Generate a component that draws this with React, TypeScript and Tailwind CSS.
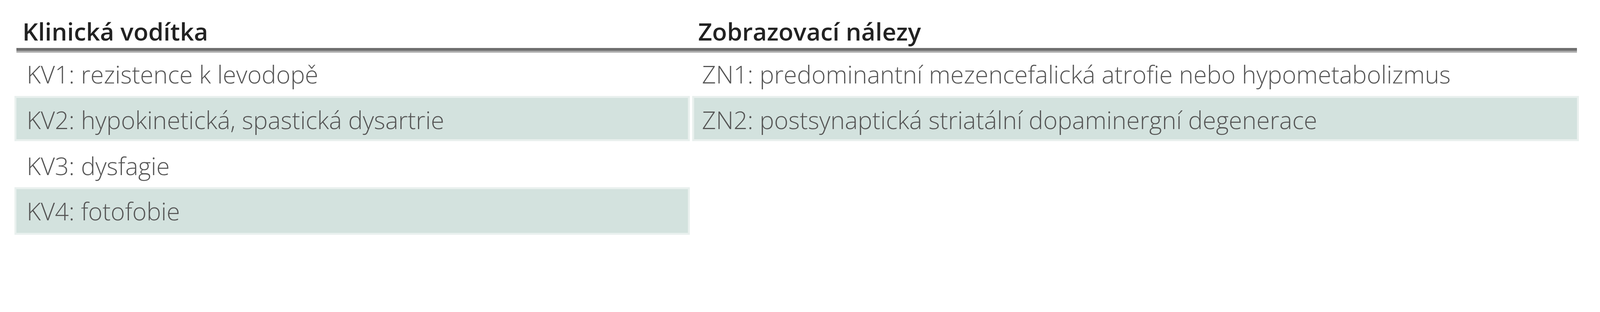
import React from "react";

type Row = {
  left: string;
  right: string;
  h: string;
  pt: string;
  band: boolean;
  rightBand: boolean;
};

const rows: Row[] = [
  { left: "KV1: rezistence k levodopě", right: "ZN1: predominantní mezencefalická atrofie nebo hypometabolizmus", h: "h-[111.2px]", pt: "pt-[18.4px]", band: false, rightBand: false },
  { left: "KV2: hypokinetická, spastická dysartrie", right: "ZN2: postsynaptická striatální dopaminergní degenerace", h: "h-[116px]", pt: "pt-[24.8px]", band: true, rightBand: true },
  { left: "KV3: dysfagie", right: "", h: "h-[117.6px]", pt: "pt-[26.4px]", band: false, rightBand: false },
  { left: "KV4: fotofobie", right: "", h: "h-[122.4px]", pt: "pt-[24.8px]", band: true, rightBand: false },
];

const bandCls = "border-[5.6px] border-[#e9f0ee] bg-[#d3e2de]";
const plainCls = "border-[5.6px] border-transparent";

export default function App() {
  return (
    <div className="w-full min-h-[640px] bg-white pl-[36.8px] font-['Open_Sans',sans-serif]">
      <div className="grid grid-cols-[1728.8px_2270.4px] gap-x-[6.4px] h-[123.2px]">
        <div className="pt-[48.8px] pl-[20.8px] text-[62.4px] leading-none font-[550] text-[#222222] whitespace-nowrap">
          Klinická vodítka
        </div>
        <div className="pt-[48.8px] pl-[15.2px] text-[62.4px] leading-none font-[550] text-[#222222] whitespace-nowrap">
          Zobrazovací nálezy
        </div>
      </div>
      <div className="ml-[5.6px] w-[3994.4px]">
        <div className="h-[6.4px] bg-[#6f6f6f]" />
        <div className="h-[5.6px] bg-[#aaaaaa]" />
      </div>
      {rows.map((r, i) => (
        <div key={i} className={`grid grid-cols-[1728.8px_2270.4px] gap-x-[6.4px] ${r.h}`}>
          <div className={`${r.band ? bandCls : plainCls} ${r.pt} pl-[26.4px] text-[62.4px] leading-none font-light text-[#555555] whitespace-nowrap`}>
            {r.left}
          </div>
          <div className={`${r.rightBand ? bandCls : plainCls} ${r.pt} pl-[20px] text-[62.4px] leading-none font-light text-[#555555] whitespace-nowrap`}>
            {r.right}
          </div>
        </div>
      ))}
    </div>
  );
}
